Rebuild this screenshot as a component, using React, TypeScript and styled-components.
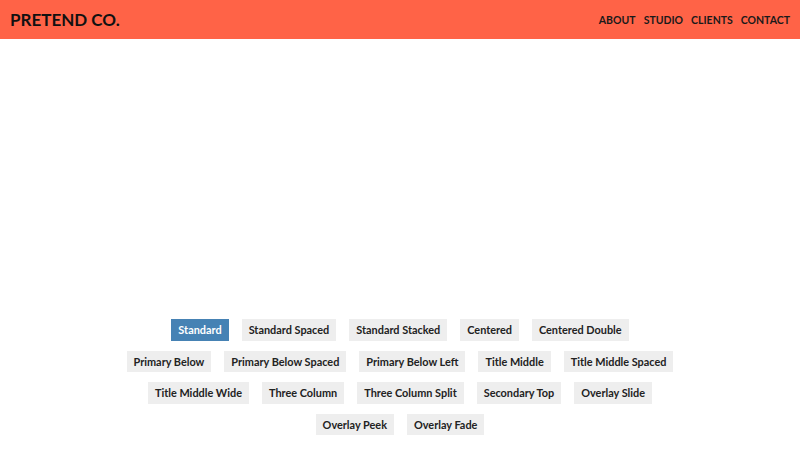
import styled, { createGlobalStyle } from "styled-components";

const GlobalStyle = createGlobalStyle`
  html, body {
    margin: 0;
    padding: 0;
    background: #ffffff;
    font-family: Lato, "Open Sans", sans-serif;
  }
`;

const Page = styled.div`
  display: flex;
  flex-direction: column;
  width: 800px;
  height: 450px;
  overflow: hidden;
`;

const Header = styled.header`
  display: flex;
  align-items: center;
  justify-content: space-between;
  height: 39px;
  padding: 0 10px;
  background-color: #ff6347;
`;

const Logo = styled.div`
  font-size: 17px;
  font-weight: 700;
  color: #111111;
`;

const Nav = styled.nav`
  display: flex;
  gap: 8px;
`;

const NavLink = styled.a`
  font-size: 10.5px;
  font-weight: 700;
  color: #1a1a1a;
  text-transform: uppercase;
  text-decoration: none;
`;

const Stage = styled.main`
  flex: 1;
`;

const Layouts = styled.div`
  display: flex;
  flex-direction: column;
  align-items: center;
  gap: 10px;
  padding-bottom: 15px;
`;

const Row = styled.div`
  display: flex;
  justify-content: center;
  gap: 13px;
`;

const LayoutButton = styled.button<{ $active?: boolean }>`
  height: 21.5px;
  padding: 0 7px;
  border: none;
  border-radius: 0;
  font-family: Lato, "Open Sans", sans-serif;
  font-size: 10.9px;
  font-weight: 700;
  color: ${(p) => (p.$active ? "#ffffff" : "#222222")};
  background-color: ${(p) => (p.$active ? "#4682b4" : "#eeeeee")};
  cursor: pointer;
`;

const rows = [
  ["Standard", "Standard Spaced", "Standard Stacked", "Centered", "Centered Double"],
  ["Primary Below", "Primary Below Spaced", "Primary Below Left", "Title Middle", "Title Middle Spaced"],
  ["Title Middle Wide", "Three Column", "Three Column Split", "Secondary Top", "Overlay Slide"],
  ["Overlay Peek", "Overlay Fade"],
];

function App() {
  return (
    <>
      <GlobalStyle />
      <Page>
        <Header>
          <Logo>PRETEND CO.</Logo>
          <Nav>
            <NavLink href="#">About</NavLink>
            <NavLink href="#">Studio</NavLink>
            <NavLink href="#">Clients</NavLink>
            <NavLink href="#">Contact</NavLink>
          </Nav>
        </Header>
        <Stage />
        <Layouts>
          {rows.map((row, i) => (
            <Row key={i}>
              {row.map((name) => (
                <LayoutButton key={name} $active={name === "Standard"}>
                  {name}
                </LayoutButton>
              ))}
            </Row>
          ))}
        </Layouts>
      </Page>
    </>
  );
}

export default App;
